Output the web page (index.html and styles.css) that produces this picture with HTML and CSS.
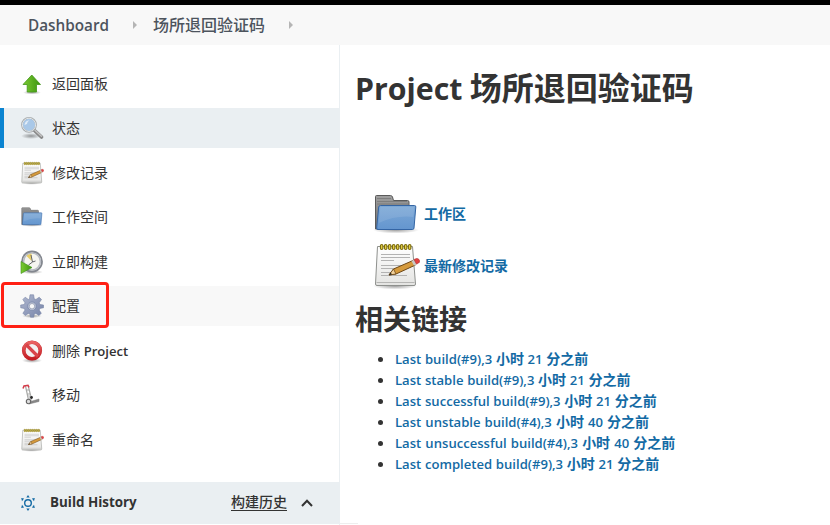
FILE: index.html
```
<!DOCTYPE html>
<html lang="zh-CN">
<head>
<meta charset="utf-8">
<title>Project 场所退回验证码</title>
<link rel="stylesheet" href="styles.css">
</head>
<body>
<svg width="0" height="0" class="defs" aria-hidden="true">
  <defs>
    <linearGradient id="green" x2="1" y2="0"><stop stop-color="#7ccb32"/><stop offset="1" stop-color="#3c9410"/></linearGradient>
    <linearGradient id="blue" x2="0" y2="1"><stop stop-color="#7da8d6"/><stop offset="1" stop-color="#6496cf"/></linearGradient>
    <linearGradient id="grey" x2="0" y2="1"><stop stop-color="#a0a0a0"/><stop offset="1" stop-color="#6c6c6c"/></linearGradient>
    <linearGradient id="paper" x2="0" y2="1"><stop stop-color="#fff"/><stop offset="1" stop-color="#e4e4e2"/></linearGradient>
    <linearGradient id="gear" x2="1" y2="1"><stop stop-color="#b0b8d0"/><stop offset="1" stop-color="#7683a8"/></linearGradient>
    <linearGradient id="red" x2="0" y2="1"><stop stop-color="#ea6262"/><stop offset="1" stop-color="#c41d24"/></linearGradient>
    <radialGradient id="shade"><stop stop-color="#000" stop-opacity=".38"/><stop offset="1" stop-color="#000" stop-opacity="0"/></radialGradient>
    <symbol id="folder" viewBox="0 0 48 48">
      <ellipse cx="24" cy="40" rx="23" ry="3.500" fill="url(#shade)"/>
      <path d="M3.500 39V6.500q0-1 1-1h14q1.500 0 2 1.500l1 3.500h14q1.500 0 1.500 1.500v27z" fill="url(#grey)" stroke="#5a5a5a"/>
      <path d="M5 8.500h14M5 11.500h30M5 14h31" stroke="#777" stroke-width=".8"/>
      <path d="M8.500 15.500h34q1.500 0 1.300 1.500l-1.800 21q-.2 1.500-1.500 1.500H6q-1.500 0-1.300-1.500l2-21q.2-1.500 1.800-1.500z" fill="url(#blue)" stroke="#3465a4"/>
      <path d="M8.300 17h34l-1 10Q24 25 6.800 33z" fill="#fff" opacity=".1"/>
    </symbol>
    <symbol id="notepad" viewBox="0 0 48 48">
      <ellipse cx="23" cy="44" rx="22" ry="3.500" fill="url(#shade)"/>
      <path d="M5.500 4.500h35l3 37.500q0 1.500-1.500 1.500H5q-1.500 0-1.500-1.500z" fill="url(#paper)" stroke="#8e908d"/>
      <path d="M4.500 40.500h38" stroke="#b5b5b3"/>
      <path d="M9 12.500h29M9 15.500h29M9 18.500h13M9 23.500h26M9 26.500h24M9 30.500h12M9 33.500h26" stroke="#b3b3b3"/>
      <g fill="#f0dc4a" stroke="#7d6c10" stroke-width="1.200"><rect x="8.500" y="2.500" width="2.400" height="5" rx="1.200"/><rect x="12.500" y="2.500" width="2.400" height="5" rx="1.200"/><rect x="16.500" y="2.500" width="2.400" height="5" rx="1.200"/><rect x="20.500" y="2.500" width="2.400" height="5" rx="1.200"/><rect x="24.500" y="2.500" width="2.400" height="5" rx="1.200"/><rect x="28.500" y="2.500" width="2.400" height="5" rx="1.200"/><rect x="32.500" y="2.500" width="2.400" height="5" rx="1.200"/><rect x="36.500" y="2.500" width="2.400" height="5" rx="1.200"/></g>
      <path d="M17 33l4.500-6 19.500-8.500 2.500 4.500-19.500 9z" fill="#d59a3c" stroke="#6d4716"/>
      <path d="M21.500 27l2.500 5-7 1z" fill="#f2d29d" stroke="#6d4716" stroke-width=".8"/>
      <path d="M17 33l1.800-2.500 1 2z" fill="#222"/>
      <path d="M39.500 19l3-1.500 2.500 4.800-3 1.500z" fill="#c9c9c5"/>
      <path d="M42 17.500l2.500-1q2.400-.2 3 2 .4 2-1 2.600l-2 1z" fill="#e34141" stroke="#ad2929" stroke-width=".6"/>
    </symbol>
  </defs>
</svg>

<div class="topline"></div>
<header class="crumbs">
  <a class="crumb-home">Dashboard</a><i class="arrow"></i>
  <a class="crumb-project">场所退回验证码</a><i class="arrow"></i>
</header>
<div class="layout">
  <aside class="side">
    <nav class="tasks">
      <a class="task"><svg viewBox="0 0 24 24"><ellipse cx="12" cy="20.500" rx="9" ry="2" fill="url(#shade)"/><path d="M11.800 3l8.700 9.500h-4V20h-9.300v-7.500H3z" fill="url(#green)" stroke="#439719" stroke-width=".8"/></svg><span>返回面板</span></a>
      <a class="task selected"><svg viewBox="0 0 24 24"><ellipse cx="11" cy="20" rx="10" ry="3" fill="url(#shade)"/><path d="M14.500 14.500l7 6.500" stroke="#888" stroke-width="3.600" stroke-linecap="round"/><path d="M15 14.300l6.500 6" stroke="#c2c2c2" stroke-width="1.500" stroke-linecap="round"/><circle cx="9" cy="8.800" r="7" fill="#a9c8e8" stroke="#a6aaac" stroke-width="1.800"/><circle cx="9" cy="8.800" r="6.600" fill="none" stroke="#e3e7e9" stroke-width="1"/><path d="M4.500 9Q5 4.500 9.500 4.200 7 6 7 8z" fill="#fff" opacity=".65"/></svg><span>状态</span></a>
      <a class="task"><svg><use href="#notepad"/></svg><span>修改记录</span></a>
      <a class="task"><svg><use href="#folder"/></svg><span>工作空间</span></a>
      <a class="task"><svg viewBox="0 0 24 24"><ellipse cx="12" cy="22" rx="11" ry="2" fill="url(#shade)"/><circle cx="12" cy="11.500" r="10" fill="#f5f5f1" stroke="#83878f" stroke-width="1.800"/><circle cx="12" cy="11.500" r="8.400" fill="none" stroke="#b7bbc3" stroke-width="1.500"/><path d="M11.500 11V3.500Q8 4 6.500 6z" fill="#e9cf69"/><path d="M11 5l1.500 7-4 3M12.500 12l3-1" fill="none" stroke="#55575b" stroke-width=".9"/><path d="M1 11.500l11 6L1 23.500z" fill="url(#green)" stroke="#3c901b" stroke-width=".6"/></svg><span>立即构建</span></a>
      <a class="task hovered"><svg viewBox="0 0 24 24"><ellipse cx="12" cy="22" rx="10" ry="2" fill="url(#shade)"/><path d="M10 .8h3.600l.6 4 1.700.7 3.300-2.300 2.300 2.300-2.300 3.300.7 1.700 3.600.5v2.800l-3.600.6-.7 1.700 2.100 3.100-2.300 2.300-3.100-2.100-1.700.7-.5 3.100h-3.200l-.5-3.100-1.700-.7-3.100 2.100-2.300-2.300L5 16.100l-.7-1.700-3.600-.6V11l3.600-.5L5 8.800 2.900 5.500l2.300-2.300 3.100 2.300 1.200-.7z" fill="url(#gear)" stroke="#7583a4" stroke-width=".6"/><circle cx="12" cy="12.200" r="4.200" fill="#c3cadc" stroke="#66759b" stroke-width=".6"/><circle cx="12" cy="12.200" r="2.700" fill="#f8f8f8" stroke="#78839e" stroke-width=".6"/></svg><span>配置</span><b class="marker"></b></a>
      <a class="task"><svg viewBox="0 0 24 24"><ellipse cx="12" cy="21.500" rx="10" ry="2.500" fill="url(#shade)"/><circle cx="12" cy="11.500" r="8.300" fill="#f3f0f0" stroke="#c9393c" stroke-width="3.600"/><circle cx="12" cy="11.500" r="8.300" fill="none" stroke="url(#red)" stroke-width="2.900"/><path d="M6 5.500l12 12" stroke="#d9444a" stroke-width="3.200"/></svg><span>删除 <em>Project</em></span></a>
      <a class="task"><svg viewBox="0 0 24 24"><path d="M9 19l10-3v2.500L9 21z" fill="#888" stroke="#777" stroke-width=".5"/><path d="M5.500 3l3 14M8.500 4l3 12M6.500 7h3M7 11h3.500" fill="none" stroke="#a9aaa8" stroke-width="1.200"/><path d="M3 5.500L4 3l4-.7 1 2" fill="none" stroke="#d43c49" stroke-width="1.500"/><path d="M8 12l4 1v5H9z" fill="#ccc"/><circle cx="11.500" cy="14.500" r="1.400" fill="#292929"/><circle cx="8.500" cy="18.500" r="2.200" fill="#ddd" stroke="#666" stroke-width="1.100"/></svg><span>移动</span></a>
      <a class="task"><svg><use href="#notepad"/></svg><span>重命名</span></a>
    </nav>
    <section class="history">
      <svg class="sun" viewBox="0 0 16 16" fill="#136aa4"><circle cx="8" cy="8" r="3.300" fill="none" stroke="#136aa4" stroke-width="1.400"/><path d="M8 0l1.700 2.500H6.300zM8 16l1.700-2.500H6.300zM1.200 3l2.900.4L2 6.200zM14.800 3l-2.900.4L14 6.200zM1.200 13l2.900-.4L2 9.800zM14.800 13l-2.900-.4L14 9.800z"/></svg>
      <strong>Build History</strong>
      <a class="trend">构建历史</a>
      <svg class="chevron" viewBox="0 0 12 8"><path d="M1 7l5-5.300L11 7" fill="none" stroke="#333" stroke-width="2"/></svg>
    </section>
  </aside>
  <main class="main">
    <h1><span class="project-word">Project</span> 场所退回验证码</h1>
    <div class="shortcuts">
      <a><svg><use href="#folder"/></svg>工作区</a>
      <a><svg><use href="#notepad"/></svg>最新修改记录</a>
    </div>
    <h2>相关链接</h2>
    <ul class="builds">
      <li><a>Last build(#9),3 <b>小时</b> 21 <b>分之前</b></a></li>
      <li><a>Last stable build(#9),3 <b>小时</b> 21 <b>分之前</b></a></li>
      <li><a>Last successful build(#9),3 <b>小时</b> 21 <b>分之前</b></a></li>
      <li class="wide"><a>Last unstable build(#4),3 <b>小时</b> 40 <b>分之前</b></a></li>
      <li class="wide"><a>Last unsuccessful build(#4),3 <b>小时</b> 40 <b>分之前</b></a></li>
      <li><a>Last completed build(#9),3 <b>小时</b> 21 <b>分之前</b></a></li>
    </ul>
    <div class="panel-edge"></div>
  </main>
</div>
</body>
</html>
```
FILE: styles.css
```
* { box-sizing: border-box; }
body {
  margin: 0;
  height: 525px;
  overflow: hidden;
  background: #fff;
  color: #333;
  font: 14px/20px "Open Sans", "Noto Sans CJK SC", sans-serif;
}
.defs { position: absolute; }
.topline { height: 5px; background: #000; }
.crumbs {
  height: 40px;
  padding-left: 28px;
  display: flex;
  align-items: center;
  background: #f8f8f8;
  color: #4d545d;
  font-size: 16px;
  font-weight: 600;
}
.crumb-home { width: 105px; font-size: 15.300px; }
.crumb-project { margin-left: 16px; width: 136px; font-weight: 500; }
.arrow {
  width: 4px;
  height: 8px;
  background: #b5b5b5;
  clip-path: polygon(0 0, 100% 50%, 0 100%);
}
.layout { display: flex; height: 480px; }
.side { width: 340px; border-right: 1px solid #eaeff2; display: flex; flex-direction: column; }
.tasks { height: 437px; padding-top: 18.500px; display: flex; flex-direction: column; gap: 4.500px; }
.task {
  position: relative;
  flex: none;
  height: 40px;
  padding-left: 20px;
  display: flex;
  align-items: center;
  gap: 8px;
}
.task svg { width: 24px; height: 24px; }
.task em { font-style: normal; font-weight: 600; font-size: 13.100px; }
.selected { background: #eaeff2; box-shadow: inset 4px 0 #0b84d1; }
.hovered { background: #f8f8f8; }
.marker {
  position: absolute;
  left: 1px;
  top: -4px;
  width: 108px;
  height: 46px;
  border: 3px solid #ff2014;
  border-radius: 4px;
}
.history {
  height: 42px;
  padding-left: 20px;
  display: flex;
  align-items: center;
  background: #eaeff2;
}
.sun { width: 16px; height: 16px; margin-right: 14px; }
.history strong { width: 181px; padding-bottom: 2px; font-size: 13.400px; font-weight: 700; }
.trend { width: 56px; margin-top: -1px; font-weight: 500; border-bottom: 1px solid #333; line-height: 16px; }
.chevron { width: 12px; height: 8px; margin-left: 14px; }
.main { flex: 1; padding: 23px 0 0 15px; display: flex; flex-direction: column; position: relative; }
h1, h2 { margin: 0; font-weight: 700; white-space: nowrap; }
h1 { height: 40px; font-size: 32px; line-height: 40px; word-spacing: -1px; }
.project-word { font-size: 30.300px; }
.shortcuts { margin: 82px 0 0 17px; display: flex; flex-direction: column; gap: 4px; }
.shortcuts a { height: 48px; display: flex; align-items: center; gap: 4px; color: #136aa4; font-weight: 700; }
.shortcuts svg { width: 48px; height: 48px; }
h2 { margin-top: 11px; height: 36px; font-size: 28px; line-height: 36px; }
.builds { margin: 12px 0 0; padding-left: 40px; line-height: 21px; }
.builds li { height: 21px; }
.builds a { position: relative; top: -1px; color: #136aa4; font-weight: 600; font-size: 13.100px; word-spacing: .3px; white-space: nowrap; }
.builds .wide a { word-spacing: .7px; }
.builds b { font-size: 14px; line-height: 1; font-weight: 700; }
.panel-edge { position: absolute; left: 0; bottom: 1px; width: 18px; height: 1px; background: #eee; }
```
